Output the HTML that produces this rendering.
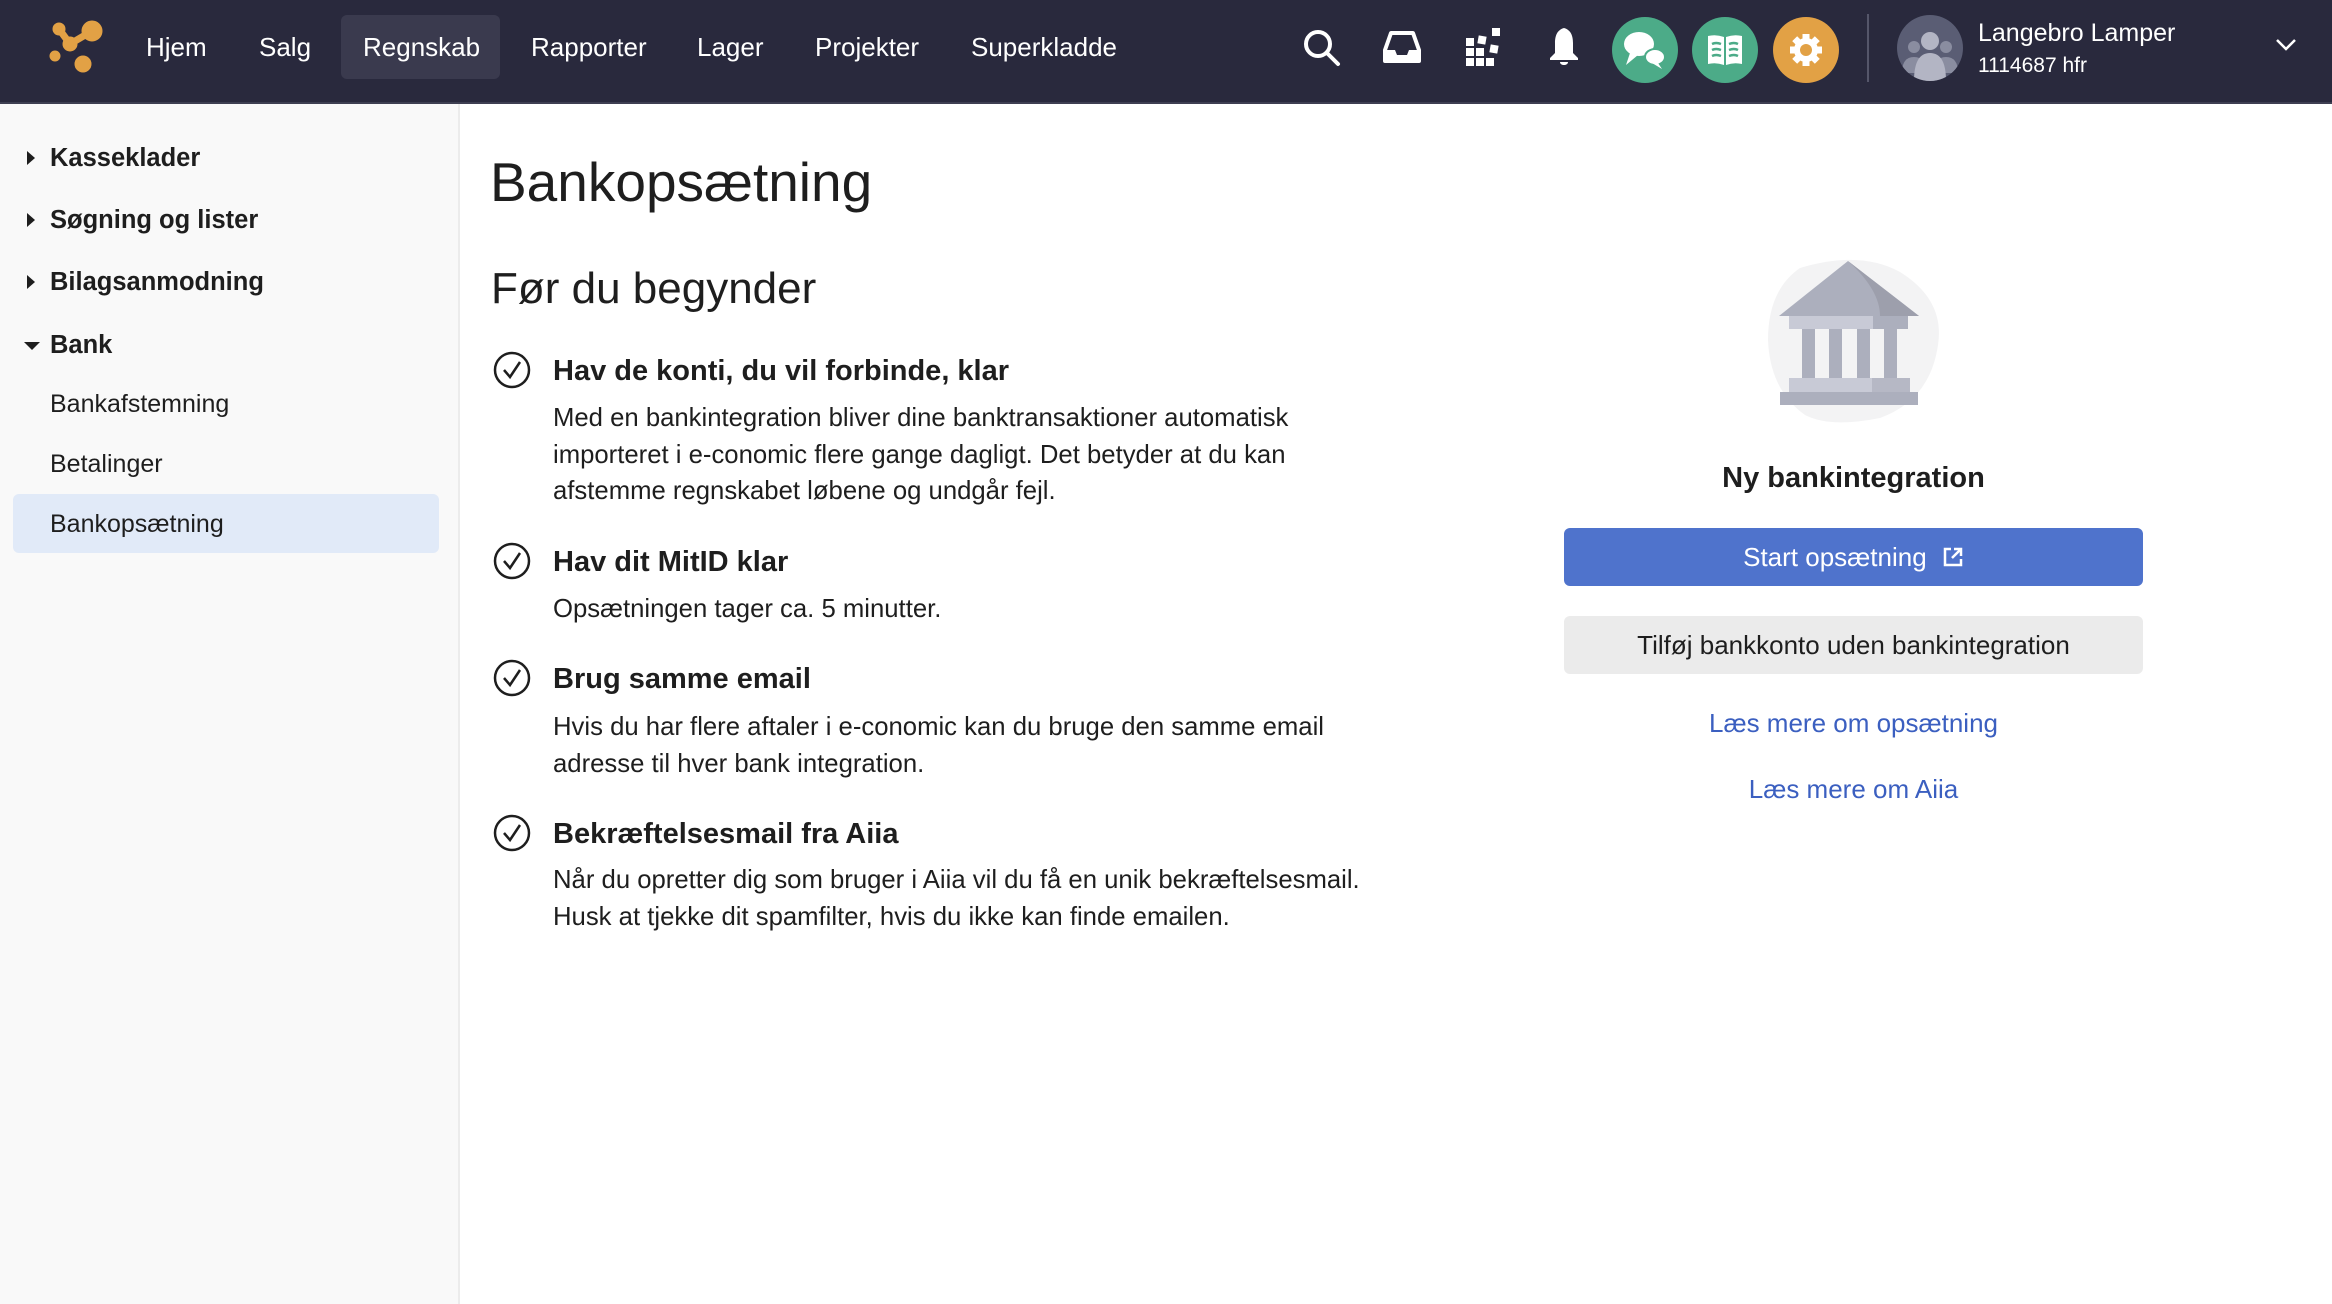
<!DOCTYPE html>
<html><head><meta charset="utf-8"><style>
*{margin:0;padding:0;box-sizing:border-box}
body{width:2332px;height:1304px;overflow:hidden;background:#fff;font-family:"Liberation Sans",Helvetica,Arial,sans-serif;color:#1e1e1e;position:relative}
.abs{position:absolute;white-space:nowrap}
.hdr{position:absolute;left:0;top:0;width:2332px;height:104px;background:#29293d;border-bottom:2px solid #3e3f52}
.nav{color:#fff;font-size:26px;top:32px}
.side{position:absolute;left:0;top:104px;width:460px;height:1200px;background:#f9f9f9;border-right:2px solid #ececec}
.sb{font-size:25.5px;font-weight:bold;left:50px}
.sn{font-size:25px;left:50px}
.tri{position:absolute;left:27px;width:0;height:0;border-top:7px solid transparent;border-bottom:7px solid transparent;border-left:8px solid #1e1e1e}
.h3{font-size:29px;font-weight:bold;left:553px}
.p{font-size:25.7px;left:553px;line-height:36.5px}
.chk{position:absolute;left:493px;width:38px;height:38px}
.link{color:#3b5fc0;font-size:26px;left:1564px;width:579px;text-align:center}
</style></head><body>
<div class="hdr"></div>
<svg class="abs" style="left:40px;top:15px" width="70" height="70" viewBox="40 15 70 70">
<g fill="#e2a145" stroke="#e2a145">
<circle cx="59" cy="29" r="6"/><circle cx="92" cy="31" r="10"/><circle cx="70" cy="44" r="7"/><circle cx="55" cy="56" r="5"/><circle cx="83" cy="64" r="8"/>
<path d="M59 29 L70 44 L92 31" stroke-width="7" fill="none"/></g></svg>
<div class="abs" style="left:341px;top:15px;width:159px;height:64px;background:#3a3a4e;border-radius:6px"></div>
<div class="abs nav" style="left:146px">Hjem</div>
<div class="abs nav" style="left:259px">Salg</div>
<div class="abs nav" style="left:363px">Regnskab</div>
<div class="abs nav" style="left:531px">Rapporter</div>
<div class="abs nav" style="left:697px">Lager</div>
<div class="abs nav" style="left:815px">Projekter</div>
<div class="abs nav" style="left:971px">Superkladde</div>
<svg class="abs" style="left:1302px;top:28px" width="40" height="40" viewBox="0 0 40 40"><circle cx="16" cy="16" r="12" fill="none" stroke="#fff" stroke-width="4"/><path d="M25 25 L36 36" stroke="#fff" stroke-width="4" stroke-linecap="round"/></svg>
<svg class="abs" style="left:1383px;top:30px" width="38" height="34" viewBox="0 0 38 34"><path d="M8 3 H30 L36 20 V31 H2 V20 Z" fill="none" stroke="#fff" stroke-width="4" stroke-linejoin="round"/><path d="M2 20 H12 L14 25 H24 L26 20 H36 V31 H2Z" fill="#fff"/></svg>
<svg class="abs" style="left:1466px;top:28px" width="36" height="38" viewBox="0 0 36 38"><g fill="#fff"><rect x="0" y="10" width="8" height="8"/><rect x="0" y="20" width="8" height="8"/><rect x="0" y="30" width="8" height="8"/><rect x="10" y="20" width="8" height="8"/><rect x="10" y="30" width="8" height="8"/><rect x="20" y="30" width="8" height="8"/><rect x="12" y="8" width="8" height="8" transform="rotate(10 16 12)"/><rect x="26" y="0" width="8" height="8"/><rect x="24" y="17" width="8" height="8" transform="rotate(10 28 21)"/></g></svg>
<svg class="abs" style="left:1549px;top:27px" width="30" height="42" viewBox="0 0 30 42"><path d="M15 1 C8 3 6 9 6 16 V26 L1 31 V33 H29 V31 L24 26 V16 C24 9 22 3 15 1Z M11 35 H19 C19 39 11 39 11 35Z" fill="#fff"/></svg>
<div class="abs" style="left:1612px;top:17px;width:66px;height:66px;border-radius:50%;background:#4cab88"></div>
<svg class="abs" style="left:1622px;top:29px" width="46" height="42" viewBox="0 0 46 42"><g fill="#fff"><ellipse cx="17" cy="15" rx="15" ry="12"/><path d="M8 24 L4 36 L16 26Z"/><ellipse cx="33" cy="28" rx="10" ry="8" stroke="#4cab88" stroke-width="2"/><path d="M36 34 L40 40 L30 34Z"/></g></svg>
<div class="abs" style="left:1692px;top:17px;width:66px;height:66px;border-radius:50%;background:#4cab88"></div>
<svg class="abs" style="left:1707px;top:34px" width="36" height="32" viewBox="0 0 36 32"><path d="M1 2 Q9 0 17 3 V31 Q9 28 1 30Z M19 3 Q27 0 35 2 V30 Q27 28 19 31Z" fill="#fff"/><g stroke="#4cab88" stroke-width="2.5" fill="none"><path d="M5 10 Q9 8 14 10 M5 16 Q9 14 14 16 M5 22 Q9 20 14 22 M22 10 Q27 8 31 10 M22 16 Q27 14 31 16 M22 22 Q27 20 31 22"/></g></svg>
<div class="abs" style="left:1773px;top:17px;width:66px;height:66px;border-radius:50%;background:#e2a145"></div>
<svg class="abs" style="left:1788px;top:32px" width="36" height="36" viewBox="0 0 36 36"><g fill="#fff"><circle cx="18" cy="18" r="12"/><g stroke="#fff" stroke-width="7"><path d="M18 2 V34 M2 18 H34 M6.7 6.7 L29.3 29.3 M29.3 6.7 L6.7 29.3"/></g></g><circle cx="18" cy="18" r="6" fill="#e2a145"/></svg>
<div class="abs" style="left:1867px;top:14px;width:2px;height:68px;background:#55566a"></div>
<div class="abs" style="left:1897px;top:15px;width:66px;height:66px;border-radius:50%;background:#5a5d74;overflow:hidden">
<svg width="66" height="66" viewBox="0 0 66 66"><g fill="#8a8da0"><circle cx="17" cy="32" r="6"/><path d="M5 58 Q5 42 17 42 Q29 42 29 58Z"/><circle cx="49" cy="32" r="6"/><path d="M37 58 Q37 42 49 42 Q61 42 61 58Z"/></g><g fill="#b3b5c4"><circle cx="33" cy="26" r="9"/><path d="M17 66 Q17 38 33 38 Q49 38 49 66Z"/></g></svg></div>
<div class="abs" style="left:1978px;top:19px;color:#fff;font-size:25px">Langebro Lamper</div>
<div class="abs" style="left:1978px;top:54px;color:#fff;font-size:21px">1114687 hfr</div>
<svg class="abs" style="left:2275px;top:38px" width="22" height="14" viewBox="0 0 22 14"><path d="M2 2 L11 11 L20 2" fill="none" stroke="#fff" stroke-width="2.5"/></svg>

<div class="side"></div>
<div class="tri" style="top:151px"></div><div class="abs sb" style="top:144px">Kasseklader</div>
<div class="tri" style="top:213px"></div><div class="abs sb" style="top:206px">Søgning og lister</div>
<div class="tri" style="top:275px"></div><div class="abs sb" style="top:268px">Bilagsanmodning</div>
<div class="abs" style="left:24px;top:342px;border-left:8px solid transparent;border-right:8px solid transparent;border-top:8px solid #1e1e1e"></div><div class="abs sb" style="top:331px">Bank</div>
<div class="abs sn" style="top:390px">Bankafstemning</div>
<div class="abs sn" style="top:450px">Betalinger</div>
<div class="abs" style="left:13px;top:494px;width:426px;height:59px;background:#e1eaf8;border-radius:6px"></div>
<div class="abs sn" style="top:510px">Bankopsætning</div>

<div class="abs" style="left:490px;top:150px;font-size:55px">Bankopsætning</div>
<div class="abs" style="left:491px;top:264px;font-size:44px">Før du begynder</div>

<svg class="chk" style="top:351px" viewBox="0 0 38 38"><circle cx="19" cy="19" r="17" fill="none" stroke="#1e1e1e" stroke-width="2.5"/><path d="M11 19 L17 26 L27 11" fill="none" stroke="#1e1e1e" stroke-width="2.5"/></svg>
<div class="abs h3" style="top:355px">Hav de konti, du vil forbinde, klar</div>
<div class="abs p" style="top:400px">Med en bankintegration bliver dine banktransaktioner automatisk<br>importeret i e-conomic flere gange dagligt. Det betyder at du kan<br>afstemme regnskabet løbene og undgår fejl.</div>

<svg class="chk" style="top:542px" viewBox="0 0 38 38"><circle cx="19" cy="19" r="17" fill="none" stroke="#1e1e1e" stroke-width="2.5"/><path d="M11 19 L17 26 L27 11" fill="none" stroke="#1e1e1e" stroke-width="2.5"/></svg>
<div class="abs h3" style="top:546px">Hav dit MitID klar</div>
<div class="abs p" style="top:591px">Opsætningen tager ca. 5 minutter.</div>

<svg class="chk" style="top:659px" viewBox="0 0 38 38"><circle cx="19" cy="19" r="17" fill="none" stroke="#1e1e1e" stroke-width="2.5"/><path d="M11 19 L17 26 L27 11" fill="none" stroke="#1e1e1e" stroke-width="2.5"/></svg>
<div class="abs h3" style="top:663px">Brug samme email</div>
<div class="abs p" style="top:709px">Hvis du har flere aftaler i e-conomic kan du bruge den samme email<br>adresse til hver bank integration.</div>

<svg class="chk" style="top:814px" viewBox="0 0 38 38"><circle cx="19" cy="19" r="17" fill="none" stroke="#1e1e1e" stroke-width="2.5"/><path d="M11 19 L17 26 L27 11" fill="none" stroke="#1e1e1e" stroke-width="2.5"/></svg>
<div class="abs h3" style="top:818px">Bekræftelsesmail fra Aiia</div>
<div class="abs p" style="top:862px">Når du opretter dig som bruger i Aiia vil du få en unik bekræftelsesmail.<br>Husk at tjekke dit spamfilter, hvis du ikke kan finde emailen.</div>

<svg class="abs" style="left:1760px;top:255px" width="190" height="175" viewBox="1760 255 190 175">
<path d="M1800 268 Q1860 250 1900 272 Q1945 300 1938 345 Q1930 400 1880 418 Q1830 428 1805 415 Q1770 390 1768 340 Q1768 290 1800 268Z" fill="#f3f3f4"/>
<path d="M1848 261 L1779 316 H1919Z" fill="#acafbd"/>
<path d="M1848 261 Q1880 290 1880 316 H1919Z" fill="#9d9fac"/>
<rect x="1789" y="316" width="119" height="13" fill="#c8cad6"/>
<rect x="1873" y="316" width="35" height="13" fill="#acafbd"/>
<g fill="#acafbd"><rect x="1802" y="329" width="13" height="49"/><rect x="1829" y="329" width="13" height="49"/><rect x="1857" y="329" width="13" height="49"/><rect x="1884" y="329" width="13" height="49"/></g>
<rect x="1789" y="378" width="121" height="14" fill="#c8cad6"/>
<rect x="1872" y="378" width="38" height="14" fill="#b6b8c5"/>
<rect x="1780" y="392" width="138" height="13" fill="#acafbd"/>
</svg>

<div class="abs" style="left:1564px;top:462px;width:579px;text-align:center;font-size:29px;font-weight:bold">Ny bankintegration</div>
<div class="abs" style="left:1564px;top:528px;width:579px;height:58px;background:#4f73cc;border-radius:6px;color:#fff;font-size:26px;text-align:center;line-height:58px">Start opsætning <svg width="22" height="22" viewBox="0 0 22 22" style="vertical-align:-2px;margin-left:8px"><path d="M9 3 H3 V19 H19 V13" fill="none" stroke="#fff" stroke-width="2.5"/><path d="M12 3 H19 V10 M19 3 L10 12" fill="none" stroke="#fff" stroke-width="2.5"/></svg></div>
<div class="abs" style="left:1564px;top:616px;width:579px;height:58px;background:#ebebeb;border-radius:6px;font-size:26px;text-align:center;line-height:58px">Tilføj bankkonto uden bankintegration</div>
<div class="abs link" style="top:708px">Læs mere om opsætning</div>
<div class="abs link" style="top:774px">Læs mere om Aiia</div>
</body></html>
